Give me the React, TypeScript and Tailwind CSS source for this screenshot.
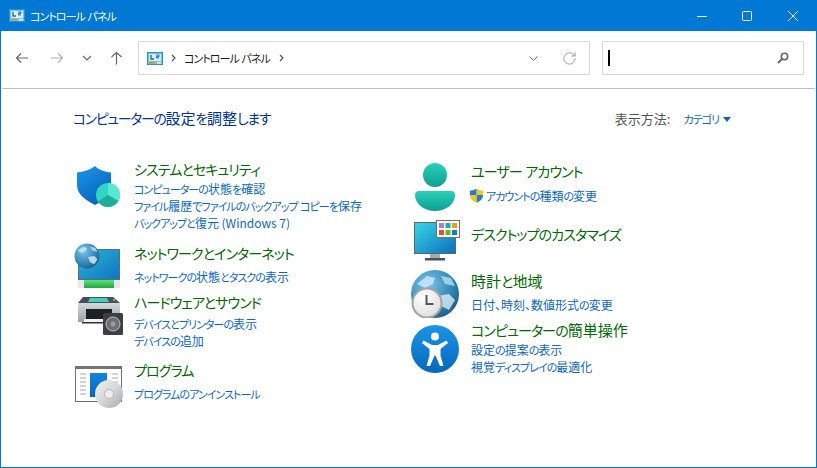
import { ReactNode } from "react";
import { RotateCw } from "lucide-react";

// kana is much narrower than kanji in the UI font of the screenshot
function Jp({ text, title }: { text: string; title?: boolean }) {
   const kana = title ? "text-[0.94em] tracking-[-0.07em]" : "text-[0.92em] tracking-[-0.09em]";
   return (
      <>
         {text.split(/([\u3040-\u30ff]+)/).map((part, i) =>
            i % 2 === 1 ? (
               <span key={i} className={kana}>
                  {part}
               </span>
            ) : (
               <span key={i}>{part}</span>
            ),
         )}
      </>
   );
}

function PanelIcon() {
   return (
      <svg width="16" height="13" viewBox="0 0 16 13" className="shrink-0">
         <rect x="0.5" y="0.5" width="15" height="12" fill="#6cc4ee" stroke="#2f8fd0" />
         <rect x="2" y="2" width="12" height="7" fill="#d8f0fb" />
         <path d="M4 3v4h3" fill="none" stroke="#1e6fb0" strokeWidth="1.4" />
         <path d="M9 3h3v1.5H9.5V6H12" fill="none" stroke="#1e6fb0" />
         <rect x="2" y="10" width="6" height="1.5" fill="#f08a1d" />
         <rect x="10" y="10" width="4" height="1.5" fill="#fff" />
      </svg>
   );
}

function ShieldIcon() {
   return (
      <svg width="48" height="48" viewBox="0 0 48 48" className="ml-[2px] mt-[4px]">
         <defs>
            <linearGradient id="shield" x1="0" y1="0" x2="0.6" y2="1">
               <stop offset="0" stopColor="#1d95e8" />
               <stop offset="1" stopColor="#0565bd" />
            </linearGradient>
         </defs>
         <path d="M21 2c4 4 10 6 16 6.500V21c0 9-6 15-16 20C11 36 3 30 3 21V8.500C9 8 16 6 21 2z" fill="url(#shield)" />
         <circle cx="34" cy="31" r="12" fill="#2fd6c0" />
         <path d="M34 31V19a12 12 0 0 1 10.400 18z" fill="#5be6d4" />
         <path d="M34 31l10.400 6A12 12 0 0 1 24 37.600z" fill="#1fae9c" />
      </svg>
   );
}

function Globe({ cx, cy, r, id }: { cx: number; cy: number; r: number; id: string }) {
   const s = r / 12;
   return (
      <g>
         <defs>
            <radialGradient id={id} cx="0.35" cy="0.3" r="0.85">
               <stop offset="0" stopColor="#7fc3e6" />
               <stop offset="0.6" stopColor="#2f86b8" />
               <stop offset="1" stopColor="#1c4f73" />
            </radialGradient>
         </defs>
         <circle cx={cx} cy={cy} r={r} fill={`url(#${id})`} />
         <path
            d={`M${cx - 9 * s} ${cy - 5 * s}l${5 * s} ${-4 * s} ${4 * s} ${1 * s} ${-1 * s} ${3 * s} ${-4 * s} ${2 * s}z`}
            fill="#d6eef8"
            fillOpacity="0.75"
         />
         <path
            d={`M${cx + 1 * s} ${cy + 1 * s}l${6 * s} ${-1 * s} ${3 * s} ${3 * s} ${-3 * s} ${5 * s} ${-4 * s} ${-2 * s}z`}
            fill="#e4f4fb"
            fillOpacity="0.75"
         />
         <path
            d={`M${cx + 3 * s} ${cy - 9 * s}l${5 * s} ${1 * s} ${2 * s} ${4 * s} ${-5 * s} ${-1 * s}z`}
            fill="#bfe3f3"
            fillOpacity="0.75"
         />
      </g>
   );
}

function NetworkIcon() {
   return (
      <svg width="48" height="48" viewBox="0 0 48 48" className="ml-[2px] mt-[-2px]">
         <defs>
            <linearGradient id="netScreen" x1="0" y1="0" x2="1" y2="1">
               <stop offset="0" stopColor="#2bb6dc" />
               <stop offset="1" stopColor="#0f74bd" />
            </linearGradient>
            <linearGradient id="netBar" x1="0" y1="0" x2="0" y2="1">
               <stop offset="0" stopColor="#5fe07a" />
               <stop offset="1" stopColor="#1fa63f" />
            </linearGradient>
         </defs>
         <rect x="4.500" y="7.500" width="41" height="30" fill="url(#netScreen)" stroke="#5d6b73" />
         <rect x="4" y="38" width="42" height="8" fill="#e8e8e8" />
         <rect x="10" y="38" width="30" height="8" fill="url(#netBar)" />
         <Globe cx={13} cy={14} r={12.500} id="netGlobe" />
      </svg>
   );
}

function PrinterIcon() {
   return (
      <svg width="48" height="48" viewBox="0 0 48 48" className="ml-[3px] mt-[-1px]">
         <defs>
            <linearGradient id="prBody" x1="0" y1="0" x2="0" y2="1">
               <stop offset="0" stopColor="#d3d8dc" />
               <stop offset="1" stopColor="#9aa3a9" />
            </linearGradient>
         </defs>
         <path d="M8 5h30l7 6v5H3v-5z" fill="#4b4f53" />
         <path d="M15 6h17l2 4H13z" fill="#3fd0bd" />
         <rect x="38" y="7" width="2" height="2" fill="#39d353" />
         <rect x="3" y="11" width="42" height="19" fill="url(#prBody)" />
         <rect x="11" y="17" width="26" height="14" fill="#1d1f21" />
         <rect x="9" y="27" width="28" height="5" fill="#f2f2f2" />
         <rect x="7" y="30" width="24" height="1.500" fill="#333" />
         <rect x="28" y="21" width="20" height="22" rx="1.500" fill="#3d3f42" />
         <circle cx="38" cy="32" r="7" fill="#6d6f72" stroke="#bdbfc1" />
         <circle cx="38" cy="32" r="2.500" fill="#9a9c9e" />
      </svg>
   );
}

function ProgramIcon() {
   return (
      <svg width="48" height="48" viewBox="0 0 48 48" className="ml-[3px] mt-[3px]">
         <defs>
            <linearGradient id="disc" x1="0" y1="0" x2="1" y2="1">
               <stop offset="0" stopColor="#f4eef2" />
               <stop offset="0.5" stopColor="#d5d8d8" />
               <stop offset="1" stopColor="#a4a8a8" />
            </linearGradient>
            <linearGradient id="progBlue" x1="0" y1="0" x2="0" y2="1">
               <stop offset="0" stopColor="#0f86db" />
               <stop offset="1" stopColor="#0668bd" />
            </linearGradient>
         </defs>
         <rect x="0.500" y="2.500" width="46" height="35" fill="#fff" stroke="#6f6f6f" />
         <rect x="0" y="2" width="47" height="3" fill="#77736f" />
         <path d="M5 10h6M5 14h6M5 18h6M5 22h6M5 26h6M5 30h6M37 10h6M37 14h6M37 18h6" stroke="#a8a8a8" />
         <rect x="15" y="9" width="17" height="24" fill="url(#progBlue)" />
         <circle cx="34" cy="30" r="14" fill="url(#disc)" />
         <circle cx="34" cy="30" r="4.500" fill="#eee" stroke="#b5b5b5" />
      </svg>
   );
}

function UserIcon() {
   return (
      <svg width="48" height="48" viewBox="0 0 48 48" className="ml-[2px] mt-[1px]">
         <defs>
            <linearGradient id="userG" x1="0" y1="0" x2="0" y2="1">
               <stop offset="0" stopColor="#28d0b8" />
               <stop offset="1" stopColor="#0f9f91" />
            </linearGradient>
         </defs>
         <circle cx="24" cy="12" r="12" fill="url(#userG)" />
         <path d="M8 28h32a4 4 0 0 1 4 4c0 9-9 16-20 16S4 41 4 32a4 4 0 0 1 4-4z" fill="url(#userG)" />
      </svg>
   );
}

function DesktopIcon() {
   return (
      <svg width="48" height="42" viewBox="0 0 48 42" className="ml-[3px] mt-[-5px]">
         <defs>
            <linearGradient id="deskG" x1="0" y1="0" x2="1" y2="1">
               <stop offset="0" stopColor="#38d6e6" />
               <stop offset="1" stopColor="#0c6fbb" />
            </linearGradient>
         </defs>
         <rect x="2.500" y="2.500" width="41" height="31" fill="url(#deskG)" stroke="#5a666e" />
         <rect x="18" y="34" width="10" height="6" fill="#a4abaf" />
         <rect x="13" y="38" width="20" height="2.500" fill="#4a5157" />
         <rect x="24.500" y="0.500" width="23" height="17" fill="#fff" stroke="#707070" />
         <rect x="27" y="3" width="5" height="5" fill="#a67ed6" />
         <rect x="33.500" y="3" width="5" height="5" fill="#12b3a4" />
         <rect x="40" y="3" width="5" height="5" fill="#f39a1b" />
         <rect x="27" y="10" width="5" height="5" fill="#e2531e" />
         <rect x="33.500" y="10" width="5" height="5" fill="#66b81f" />
         <rect x="40" y="10" width="5" height="5" fill="#0a7fd6" />
      </svg>
   );
}

function ClockIcon() {
   return (
      <svg width="48" height="48" viewBox="0 0 48 48" className="ml-[2px] mt-[-2px]">
         <defs>
            <radialGradient id="clockFace" cx="0.35" cy="0.3" r="0.8">
               <stop offset="0" stopColor="#ffffff" />
               <stop offset="1" stopColor="#dcdcdc" />
            </radialGradient>
         </defs>
         <Globe cx={24} cy={24} r={24} id="clockGlobe" />
         <circle cx="16" cy="33" r="14.500" fill="url(#clockFace)" stroke="#a3a3a3" strokeWidth="2" />
         <path d="M15.500 25v9h7" fill="none" stroke="#555" strokeWidth="2" />
      </svg>
   );
}

function AccessIcon() {
   return (
      <svg width="48" height="48" viewBox="0 0 48 48" className="ml-[2px] mt-[4px]">
         <defs>
            <linearGradient id="accG" x1="0" y1="0" x2="0" y2="1">
               <stop offset="0" stopColor="#1b95e4" />
               <stop offset="1" stopColor="#0668bd" />
            </linearGradient>
         </defs>
         <circle cx="24" cy="24" r="24" fill="url(#accG)" />
         <circle cx="24" cy="11.500" r="4" fill="#fff" />
         <path
            d="M12.500 15.500l8.500 4.500h6l8.500-4.500 1.500 2.500-7.500 6v6.500l3 10.500h-3.500l-4.500-10.500h-1l-4.500 10.500h-3.500l3-10.500V24l-7.500-6z"
            fill="#fff"
         />
      </svg>
   );
}

function UacShield() {
   return (
      <svg width="15" height="15" viewBox="0 0 15 15" className="shrink-0">
         <path d="M7.500 0.500C9.500 2 11.500 2.500 14 2.500V7c0 3.500-2.500 6-6.500 7.500z" fill="#f5c518" />
         <path d="M7.500 0.500C5.500 2 3.500 2.500 1 2.500V7h6.500z" fill="#1f7fd6" />
         <path d="M7.500 7H14c0 3.500-2.500 6-6.500 7.500z" fill="#1f7fd6" />
         <path d="M1 7h6.500v7.500C3.500 13 1 10.500 1 7z" fill="#f5c518" />
      </svg>
   );
}

interface CategoryProps {
   icon: ReactNode;
   title: string;
   links?: string[];
   className?: string;
   titleClass?: string;
   badge?: boolean;
}

function Category({ icon, title, links = [], className = "", titleClass = "", badge }: CategoryProps) {
   return (
      <div className={`flex ${className}`}>
         <div className="w-[61px] h-0 shrink-0">{icon}</div>
         <div className="min-w-0 pl-px">
            <div className={`h-[20px] text-[15px] leading-[18px] text-[#006a00] whitespace-nowrap ${titleClass}`}>
               <Jp text={title} title />
            </div>
            {links.map((link) => (
               <div
                  key={link}
                  className={`flex items-center h-[17px] text-[12px] leading-[17px] text-[#0a66cc] whitespace-nowrap ${badge ? "-ml-[2px] gap-[2px]" : ""}`}
               >
                  {badge && <UacShield />}
                  <div>
                     <Jp text={link} />
                  </div>
               </div>
            ))}
         </div>
      </div>
   );
}

export default function App() {
   return (
      <div
         className="flex flex-col w-[817px] h-[468px] overflow-hidden bg-white border-x border-b border-[#0078d4] [font-feature-settings:'palt'] text-[#1a1a1a]"
         style={{ fontFamily: '"Noto Sans CJK JP", "Noto Sans", sans-serif' }}
      >
         <div className="flex items-center h-[31px] shrink-0 bg-[#0078d4] pl-[9px] text-white -mx-px">
            <PanelIcon />
            <span className="ml-[5px] text-[12px]">
               <Jp text="コントロール パネル" />
            </span>
            <div className="flex items-center ml-auto">
               <svg width="12" height="12" viewBox="0 0 12 12" className="mr-[33px]">
                  <path d="M1 6.500h10" stroke="#fff" />
               </svg>
               <svg width="12" height="12" viewBox="0 0 12 12" className="mr-[34px]">
                  <rect x="1.500" y="1.500" width="9" height="9" rx="1" fill="none" stroke="#fff" />
               </svg>
               <svg width="12" height="12" viewBox="0 0 12 12" className="mr-[18px]">
                  <path d="M1 1l10 10M11 1L1 11" stroke="#fff" />
               </svg>
            </div>
         </div>

         <div className="h-[58px] shrink-0 border-b border-[#bfbfbf] mx-px">
            <div className="flex items-center h-[34px] mt-[10px] pl-[13px]">
               <svg width="14" height="12" viewBox="0 0 14 12" className="mr-[21px]">
                  <path d="M13 6H1.500M6 1.500L1.500 6 6 10.500" fill="none" stroke="#666" strokeWidth="1.200" />
               </svg>
               <svg width="14" height="12" viewBox="0 0 14 12" className="mr-[18px]">
                  <path d="M1 6h11.500M8 1.500L12.500 6 8 10.500" fill="none" stroke="#b3b3b3" strokeWidth="1.200" />
               </svg>
               <svg width="10" height="6" viewBox="0 0 10 6" className="mr-[18px]">
                  <path d="M1 1l4 4 4-4" fill="none" stroke="#666" strokeWidth="1.200" />
               </svg>
               <svg width="13" height="14" viewBox="0 0 13 14" className="mr-[15px]">
                  <path d="M6.500 13.500V1.500M1.500 6l5-4.500 5 4.500" fill="none" stroke="#666" strokeWidth="1.200" />
               </svg>
               <div className="flex items-center w-[452px] h-[34px] border border-[#d9d9d9] pl-[8px]">
                  <PanelIcon />
                  <svg width="5" height="8" viewBox="0 0 5 8" className="ml-[8px] mr-[8px]">
                     <path d="M1 1l3 3-3 3" fill="none" stroke="#555" strokeWidth="1.200" />
                  </svg>
                  <span className="text-[12px]">
                     <Jp text="コントロール パネル" />
                  </span>
                  <svg width="5" height="8" viewBox="0 0 5 8" className="ml-[9px]">
                     <path d="M1 1l3 3-3 3" fill="none" stroke="#555" strokeWidth="1.200" />
                  </svg>
                  <svg width="9" height="5" viewBox="0 0 9 5" className="ml-auto mr-[24px]">
                     <path d="M0.500 0.500l4 4 4-4" fill="none" stroke="#777" />
                  </svg>
                  <RotateCw size={15} strokeWidth={1.3} color="#888" className="mr-[12px]" />
               </div>
               <div className="flex items-center justify-between w-[202px] h-[34px] ml-[12px] border border-[#d9d9d9] pl-[5px] pr-[14px]">
                  <div className="w-[2px] h-[16px] bg-black" />
                  <svg width="12" height="12" viewBox="0 0 12 12">
                     <circle cx="7.500" cy="4.500" r="3.200" fill="none" stroke="#666" strokeWidth="1.600" />
                     <path d="M5 7l-4 4" stroke="#666" strokeWidth="2" />
                  </svg>
               </div>
            </div>
         </div>

         <div className="flex-1 min-h-0">
            <div className="flex items-center justify-between h-[20px] mt-[20px] pl-[72px] pr-[85px]">
               <div className="pb-[2px] text-[15px] text-[#003399]">
                  <Jp text="コンピューターの設定を調整します" />
               </div>
               <div className="flex items-center text-[12px]">
                  <span className="text-[13px] text-[#555555]">表示方法:</span>
                  <span className="ml-[13px] text-[#0a66cc]">
                     <Jp text="カテゴリ" />
                  </span>
                  <div className="ml-[4px] w-0 h-0 border-x-[4px] border-x-transparent border-t-[5px] border-t-[#0a66cc]" />
               </div>
            </div>
            <div className="grid grid-cols-[337px_1fr] items-start mt-[31px] pl-[71px]">
               <div>
                  <Category
                     icon={<ShieldIcon />}
                     title="システムとセキュリティ"
                     links={["コンピューターの状態を確認", "ファイル履歴でファイルのバックアップ コピーを保存", "バックアップと復元 (Windows 7)"]}
                  />
                  <Category
                     icon={<NetworkIcon />}
                     title="ネットワークとインターネット"
                     links={["ネットワークの状態とタスクの表示"]}
                     className="mt-[13px]"
                     titleClass="mb-[4px]"
                  />
                  <Category
                     icon={<PrinterIcon />}
                     title="ハードウェアとサウンド"
                     links={["デバイスとプリンターの表示", "デバイスの追加"]}
                     className="mt-[8px]"
                     titleClass="mb-[2px]"
                  />
                  <Category
                     icon={<ProgramIcon />}
                     title="プログラム"
                     links={["プログラムのアンインストール"]}
                     className="mt-[12px]"
                     titleClass="mb-[4px]"
                  />
               </div>
               <div className="pt-[2px]">
                  <Category
                     icon={<UserIcon />}
                     title="ユーザー アカウント"
                     links={["アカウントの種類の変更"]}
                     titleClass="mb-[5px]"
                     badge
                  />
                  <Category icon={<DesktopIcon />} title="デスクトップのカスタマイズ" className="mt-[21px]" />
                  <Category
                     icon={<ClockIcon />}
                     title="時計と地域"
                     links={["日付、時刻、数値形式の変更"]}
                     className="mt-[27px]"
                     titleClass="mb-[4px]"
                  />
                  <Category
                     icon={<AccessIcon />}
                     title="コンピューターの簡単操作"
                     links={["設定の提案の表示", "視覚ディスプレイの最適化"]}
                     className="mt-[8px]"
                  />
               </div>
            </div>
         </div>
      </div>
   );
}
